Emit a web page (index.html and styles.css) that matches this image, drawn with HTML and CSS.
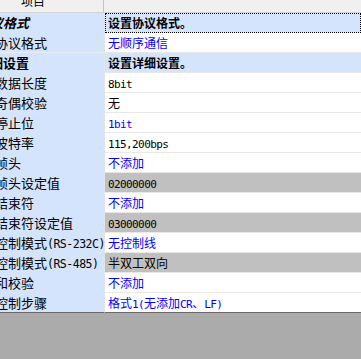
FILE: index.html
```html
<!DOCTYPE html>
<html>
<head>
<meta charset="utf-8">
<link rel="stylesheet" href="styles.css">
</head>
<body>
<div class="grid">
  <div class="head">
    <div class="hk"><div class="ht">项目</div></div>
    <div class="hv"></div>
  </div>
  <div class="row cat">
    <div class="k"><span class="lbl cl it">协议格式</span></div>
    <div class="v focus"><span class="b">设置协议格式。</span></div>
  </div>
  <div class="row pre">
    <div class="k"><span class="lbl">协议格式</span></div>
    <div class="v blue">无顺序通信</div>
  </div>
  <div class="row cat">
    <div class="k"><span class="lbl cl">详细设置</span></div>
    <div class="v"><span class="b">设置详细设置。</span></div>
  </div>
  <div class="row">
    <div class="k"><span class="lbl">数据长度</span></div>
    <div class="v"><span class="en">8bit</span></div>
  </div>
  <div class="row">
    <div class="k"><span class="lbl">奇偶校验</span></div>
    <div class="v">无</div>
  </div>
  <div class="row">
    <div class="k"><span class="lbl">停止位</span></div>
    <div class="v blue"><span class="en">1bit</span></div>
  </div>
  <div class="row">
    <div class="k"><span class="lbl">波特率</span></div>
    <div class="v"><span class="en">115,200bps</span></div>
  </div>
  <div class="row">
    <div class="k"><span class="lbl">帧头</span></div>
    <div class="v blue">不添加</div>
  </div>
  <div class="row">
    <div class="k"><span class="lbl">帧头设定值</span></div>
    <div class="v gray"><span class="en">02000000</span></div>
  </div>
  <div class="row">
    <div class="k"><span class="lbl">结束符</span></div>
    <div class="v blue">不添加</div>
  </div>
  <div class="row">
    <div class="k"><span class="lbl">结束符设定值</span></div>
    <div class="v gray"><span class="en">03000000</span></div>
  </div>
  <div class="row">
    <div class="k"><span class="lbl">控制模式<span class="en">(RS-232C)</span></span></div>
    <div class="v blue">无控制线</div>
  </div>
  <div class="row">
    <div class="k"><span class="lbl">控制模式<span class="en">(RS-485)</span></span></div>
    <div class="v gray">半双工双向</div>
  </div>
  <div class="row">
    <div class="k"><span class="lbl">和校验</span></div>
    <div class="v blue">不添加</div>
  </div>
  <div class="row last">
    <div class="k"><span class="lbl">控制步骤</span></div>
    <div class="v blue">格式<span class="en">1(</span>无添加<span class="en">CR</span>、<span class="en">LF)</span></div>
  </div>
</div>
</body>
</html>
```
FILE: styles.css
```css
html, body {
  margin: 0;
  padding: 0;
  background: #ababab;
}
body {
  font-family: "Noto Sans CJK SC", sans-serif;
  font-size: 12px;
  color: #000;
}
.grid {
  width: 361px;
  background: #fff;
}
.head {
  display: flex;
  height: 13px;
  box-sizing: border-box;
  border-bottom: 1px solid #d4d4d4;
  background: #f0f0f0;
}
.hk {
  width: 104px;
  border-right: 1px solid #c4c4c4;
  overflow: hidden;
  padding-left: 21px;
  box-sizing: border-box;
}
.ht {
  line-height: 20px;
  margin-top: -9px;
  font-size: 12px;
}
.hv {
  flex: 1;
}
.row {
  display: flex;
  height: 20px;
}
.k {
  width: 104px;
  flex: none;
  background: #d4e4fc;
  border-right: 1px solid #e4e4e4;
  border-bottom: 1px solid #d4e4fc;
  overflow: hidden;
  white-space: nowrap;
  line-height: 19px;
  font-size: 13px;
}
.lbl {
  display: inline-block;
  margin-left: -5px;
}
.lbl.cl {
  margin-left: -23px;
  font-weight: 700;
}
.lbl.it {
  font-style: italic;
}
.v {
  flex: 1;
  border-bottom: 1px solid #e8e8e8;
  padding-left: 3px;
  line-height: 19px;
  white-space: nowrap;
  overflow: hidden;
}
.cat .v {
  background: #d4e4fc;
}
.b {
  font-weight: 700;
}
.pre .k {
  border-bottom-color: #e8eef8;
}
.focus {
  outline: 1px dotted #000;
  outline-offset: -1px;
}
.blue {
  color: #0000ff;
}
.gray {
  background: #c0c0c0;
}
.en {
  font-family: "DejaVu Sans Mono", monospace;
  font-size: 11px;
  letter-spacing: -0.6px;
}
.k .en {
  font-size: 11.5px;
  letter-spacing: -0.5px;
}
.last .k,
.last .v {
  border-bottom-color: #6a6a6a;
}
```
